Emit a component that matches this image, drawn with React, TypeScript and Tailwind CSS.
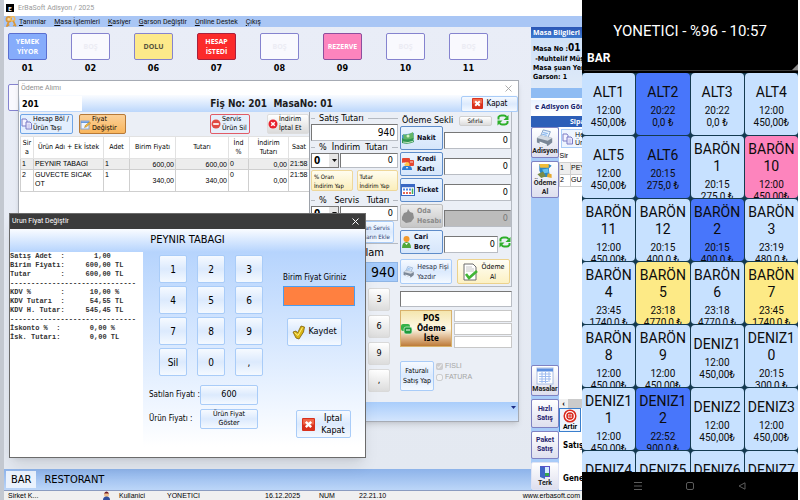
import React from "react";
import clsx from "clsx";

const tahoma = "font-['DejaVu_Sans_Condensed','Noto_Sans',sans-serif]";
const segoe = "font-['Open_Sans','Noto_Sans',sans-serif]";
const roboto = "font-['Roboto',sans-serif]";
const arial = "font-['Liberation_Sans',sans-serif]";

const blueButton =
  "flex items-center justify-center rounded-xs border border-[#a9ccf8] bg-linear-to-b from-[#f6faff] via-[#dceafd] to-[#f4f9ff]";
const field = "min-w-0 border border-[#b9bdc4] border-t-[#777] border-l-[#777] bg-white text-right";

/* ---------- icons ---------- */

function CloseBox({ size = 11 }: { size?: number }) {
  return (
    <svg width={size} height={size} viewBox="0 0 12 12" className="shrink-0">
      <rect width="12" height="12" rx="1" fill="#d8301c" />
      <rect x="1" y="1" width="10" height="5" fill="#f0684a" />
      <path d="M3.5 3.5l5 5M8.5 3.5l-5 5" stroke="#fff" strokeWidth="2.2" />
    </svg>
  );
}

function RefreshIcon() {
  return (
    <svg width="12" height="12" viewBox="0 0 12 12" className="shrink-0">
      <path d="M1.500 5.500V3q1-1.500 3-1.500h2.500q1.500 0 2.500 1.500" fill="none" stroke="#2eaf2b" strokeWidth="2" />
      <path d="M11.500 1v5H6.500z" fill="#2eaf2b" />
      <path d="M10.500 7v2q-1 1.500-3 1.500H5q-1.500 0-2.500-1.500" fill="none" stroke="#2eaf2b" strokeWidth="2" />
      <path d="M.5 11.500V6.500h5z" fill="#2eaf2b" />
    </svg>
  );
}

function KeysIcon() {
  return (
    <svg width="14" height="12" viewBox="0 0 12 11" className="shrink-0">
      <circle cx="4" cy="3" r="2.200" fill="#f4d9a4" stroke="#d9973a" strokeWidth="1.600" />
      <circle cx="7.500" cy="2.500" r="2" fill="none" stroke="#efb95e" strokeWidth="1.400" />
      <path d="M4 5L2 10M3 8l1.500.8M8 4.500l2.500 5M9.500 8l-1.500 1" stroke="#d9973a" strokeWidth="1.600" />
    </svg>
  );
}

function CopyIcon() {
  return (
    <svg width="11" height="12" viewBox="0 0 11 12" className="shrink-0">
      <path d="M1 1h4l1 1.500V8H1z" fill="#f5f4ff" stroke="#7a7ac4" />
      <path d="M5 4h4l1.500 1.500V11H5z" fill="#e8e6fb" stroke="#7a7ac4" />
      <path d="M6.500 7H9M6.500 9H9" stroke="#a7a7dc" strokeWidth=".7" />
    </svg>
  );
}

function EditIcon() {
  return (
    <svg width="11" height="11" viewBox="0 0 11 11" className="shrink-0">
      <rect x="1" y="2" width="8" height="8" fill="#eef5ff" stroke="#8aa6cf" />
      <path d="M1 3.200h8" stroke="#5f93da" strokeWidth="1.500" />
      <path d="M4.500 8.500l1-2.200L9.500 3l1 1.300-4 3.500z" fill="#f3b83a" stroke="#a97618" strokeWidth=".5" />
    </svg>
  );
}

function RoundIcon({ kind }: { kind: "minus" | "cross" }) {
  return (
    <svg width="10" height="10" viewBox="0 0 10 10" className="shrink-0">
      <circle cx="5" cy="5" r="4.500" fill={kind === "minus" ? "#e04b43" : "#e8202c"} />
      {kind === "minus" ? (
        <path d="M2.200 5h5.600" stroke="#fff" strokeWidth="1.700" />
      ) : (
        <path d="M3.200 3.200l3.600 3.600M6.800 3.200L3.200 6.800" stroke="#fff" strokeWidth="1.500" />
      )}
    </svg>
  );
}

function MoneyIcon() {
  return (
    <svg width="14" height="14" viewBox="0 0 14 14" className="shrink-0">
      <path d="M1 4l5-1 7-1-1 7-6 1-5 1z" fill="#4c95c9" />
      <path d="M2 3q4 2 10-2l1 7q-5 3-10 1z" fill="#63b567" />
      <path d="M1 7q4 3 11 0l1 4q-6 3-12 1z" fill="#2f9552" />
      <circle cx="7" cy="5" r="1.500" fill="#d5f2c7" />
      <path d="M2 11q5 1.500 10-.7" stroke="#bfe5c0" fill="none" />
    </svg>
  );
}

function CardsIcon() {
  return (
    <svg width="14" height="14" viewBox="0 0 14 14" className="shrink-0">
      <rect x="1" y="1" width="8" height="5" rx="1" fill="#e44531" />
      <rect x="5" y="3" width="8" height="6" rx="1" fill="#e44531" />
      <circle cx="6" cy="7.500" r="2.500" fill="#ffc44c" />
      <path d="M1 13q0-4 3-4h4q3 0 3 4z" fill="#2e7bd3" />
      <path d="M2 6h3M9 5h3" stroke="#fff" strokeWidth=".8" />
      <path d="M5 10l1 2 1-2" fill="#fff" />
    </svg>
  );
}

function TicketIcon() {
  return (
    <svg width="14" height="12" viewBox="0 0 14 12" className="shrink-0">
      <rect x=".5" y=".5" width="13" height="11" fill="#fff" stroke="#3a68c4" />
      <path d="M.5 2h13" stroke="#3a68c4" strokeWidth="2.500" />
      <path d="M3 4.500v2M6 4.500v2M9 4.500v2" stroke="#3f7ae0" strokeWidth="1.800" />
      <path d="M3 8v2M6 8v2M9 8v2" stroke="#e35a44" strokeWidth="1.800" />
      <path d="M11.500 4.500V10" stroke="#3fae57" strokeWidth="1.500" />
    </svg>
  );
}

function BlobIcon() {
  return (
    <svg width="14" height="16" viewBox="0 0 14 16" className="shrink-0">
      <path d="M1 9l2-4 3-1 1-3 2 3 3 1 1 5-3 4-5 1-4-3z" fill="#8d8d8d" />
    </svg>
  );
}

function PersonIcon() {
  return (
    <svg width="11" height="14" viewBox="0 0 11 14" className="shrink-0">
      <path d="M1 13q0-6 4.500-6T10 13z" fill="#4fa83b" />
      <circle cx="5.500" cy="4" r="3" fill="#f39a2c" />
      <path d="M4 8l1.500 2L7 8z" fill="#fff" />
    </svg>
  );
}

function PrinterIcon({ size = 12 }: { size?: number }) {
  return (
    <svg width={size} height={size} viewBox="0 0 20 20" className="shrink-0">
      <path d="M5 8L8 1l8 2-3 7z" fill="#e4f0fd" stroke="#7d9cc4" />
      <path d="M1 10l4-3 13 3v5l-5 4-12-4z" fill="#7b8797" />
      <path d="M1 10l4-3 13 3-5 3z" fill="#d3dae3" />
      <path d="M4 14l8 3v2l-8-3z" fill="#f4f7fb" />
      <path d="M8 4l5 1M7 6l5 1" stroke="#6aa4e8" />
    </svg>
  );
}

function PageCheckIcon() {
  return (
    <svg width="15" height="18" viewBox="0 0 15 18" className="shrink-0">
      <path d="M1 1h9l3 3v13H1z" fill="#fff" stroke="#6d6d6d" />
      <path d="M3 4h6M3 6h8M3 8h8" stroke="#b8b8b8" strokeWidth=".8" />
      <path d="M3 11l3 4 8-7" fill="none" stroke="#41b536" strokeWidth="2.600" />
    </svg>
  );
}

function PosIcon() {
  return (
    <svg width="12" height="12" viewBox="0 0 12 12" className="shrink-0">
      <rect x="0" y="1" width="9" height="7" rx="2" fill="#35b24a" />
      <rect x="3" y="4" width="8" height="7" rx="2" fill="#1d9a3c" stroke="#d7f5d9" strokeWidth=".7" />
      <path d="M5 7h4" stroke="#fff" />
    </svg>
  );
}

function TickIcon() {
  return (
    <svg width="14" height="15" viewBox="0 0 14 15" className="shrink-0">
      <path d="M1 7l3-1 1.500 2L9 1l3.500 1-1 5-4.500 7-3-1z" fill="#d9b514" stroke="#7d5f0a" strokeWidth=".8" />
      <path d="M2.500 7.500l3.500 3L10.500 2.500" stroke="#fff08a" fill="none" />
    </svg>
  );
}

function SpreadsheetIcon() {
  return (
    <svg width="18" height="18" viewBox="0 0 18 18">
      <rect x="1" y="1" width="16" height="16" fill="#fff" stroke="#a9bce2" />
      <path d="M1 3h16" stroke="#5d8fe0" strokeWidth="3" />
      <path d="M3 7h12M3 9.500h12M3 12h12M3 14.500h9M6 5v11M9.500 5v11M13 5v10" stroke="#9fbcf0" />
    </svg>
  );
}

function ScrollMoneyIcon() {
  return (
    <svg width="18" height="18" viewBox="0 0 18 18">
      <path d="M3 2h10l3 2-3 3 1 9H6L3 9z" fill="#2988c9" />
      <path d="M3 2h10v4H4z" fill="#f1bd3a" />
      <path d="M6 8l6-1 1 4-5 1z" fill="#6cc3ef" />
      <path d="M1 13l6-3 3 5-5 2z" fill="#7b8b46" />
      <path d="M12 12l4 1v4l-5-1z" fill="#e6a92d" />
    </svg>
  );
}

function DoorIcon() {
  return (
    <svg width="12" height="14" viewBox="0 0 12 14">
      <rect x="1" y="1" width="10" height="11" fill="#5b52c9" />
      <path d="M6 2h4v9H6z" fill="#d5ecff" />
      <path d="M6 8h4v3H6z" fill="#36a84c" />
      <path d="M1 1l5 2v11l-5-2z" fill="#4067c6" />
    </svg>
  );
}

function TargetIcon() {
  return (
    <svg width="14" height="14" viewBox="0 0 14 14">
      <circle cx="7" cy="7" r="5.800" fill="#fff" stroke="#d9281d" strokeWidth="1.500" />
      <circle cx="7" cy="7" r="3" fill="#fff" stroke="#d9281d" strokeWidth="1.500" />
      <path d="M7 4v6M4 7h6" stroke="#d9281d" />
    </svg>
  );
}

/* ---------- main window ---------- */

type Status = "eating" | "empty" | "full" | "bill" | "reserved";

const statusClass: Record<Status, string> = {
  eating: "border-[#5a6fd0] bg-[#86acfb] text-white",
  empty: "border-[#8583cf] bg-[#f9f9fe] text-[#ececf4]",
  full: "border-[#8583cf] bg-[#fde98a] text-[#55523c]",
  bill: "border-[#a8203c] bg-[#fb2a2a] text-white",
  reserved: "border-[#8c4f9e] bg-[#fd84bd] text-white",
};

const tables: { no: string; label: string; status: Status }[] = [
  { no: "01", label: "YEMEK\nYİYOR", status: "eating" },
  { no: "02", label: "BOŞ", status: "empty" },
  { no: "06", label: "DOLU", status: "full" },
  { no: "07", label: "HESAP\nİSTEDİ", status: "bill" },
  { no: "08", label: "BOŞ", status: "empty" },
  { no: "09", label: "REZERVE", status: "reserved" },
  { no: "10", label: "BOŞ", status: "empty" },
  { no: "11", label: "BOŞ", status: "empty" },
];

const menus = [
  ["T", "anımlar"],
  ["M", "asa İşlemleri"],
  ["K", "asiyer"],
  ["G", "arson Değiştir"],
  ["O", "nline Destek"],
  ["Ç", "ıkış"],
];

function MenuBar() {
  return (
    <>
      <header className={clsx("flex h-4 shrink-0 items-center gap-1 bg-white pl-0.5 text-[7px] text-[#9a9a9a]", roboto)}>
        <span className="flex size-2 items-center justify-center bg-black text-[6px] font-bold text-white">E</span>
        ErBaSoft Adisyon / 2025
      </header>
      <nav className={clsx("flex h-[11px] shrink-0 items-center bg-[#a9c6f5] text-[7px] text-[#111]", roboto)}>
        <KeysIcon />
        <div className="flex gap-2 pl-px">
          {menus.map(([key, rest]) => (
            <button key={rest} className="whitespace-nowrap leading-[10px]">
              <u>{key}</u>
              {rest}
            </button>
          ))}
        </div>
      </nav>
    </>
  );
}

function TableMap() {
  return (
    <main className="min-w-0 flex-1 overflow-hidden bg-linear-to-b from-[#e9edf7] to-[#e4e9f1] pt-1.5 pl-1">
      <div className="flex gap-6">
        {tables.map((t) => (
          <div key={t.no} className="flex w-[39px] shrink-0 flex-col items-center">
            <button
              className={clsx(
                "h-[27px] w-full whitespace-pre-line rounded-xs border text-[7px] leading-[10px] font-bold",
                statusClass[t.status]
              )}
            >
              {t.label}
            </button>
            <span className={clsx("pt-0.5 text-[9px] leading-3 font-bold text-black", tahoma)}>{t.no}</span>
          </div>
        ))}
      </div>
      <button aria-label="Masa" className="mt-2.5 h-[27px] w-[39px] rounded-xs border border-[#8583cf] bg-[#f9f9fe]" />
    </main>
  );
}

function SideButton({ label, icon, className }: { label: string; icon?: React.ReactNode; className?: string }) {
  return (
    <button
      className={clsx(
        "flex w-full flex-col items-center justify-center whitespace-pre-line rounded-xs border border-[#7f82c2] bg-linear-to-b from-white to-[#dedfee] text-[7px] leading-[9px] font-bold",
        roboto,
        className
      )}
    >
      {icon}
      {label}
    </button>
  );
}

function SidePanel() {
  return (
    <aside className="flex w-[51px] shrink-0 flex-col overflow-hidden whitespace-nowrap bg-white">
      <h2 className="h-[11px] shrink-0 bg-linear-to-b from-[#2a55b5] to-[#3f7bd0] pl-0.5 text-[7px] leading-[11px] font-bold text-white">
        Masa Bilgileri
      </h2>
      <div className="h-[50px] shrink-0 bg-linear-to-b from-[#cfe1f8] to-[#dfeaf8] pt-1 pl-0.5 text-[7px] leading-[9px] font-bold text-black">
        <p className={clsx("leading-[11px]", tahoma)}>
          Masa No :<span className="text-[10px]">01</span>
        </p>
        <p className={tahoma}>&nbsp;-Muhtelif Müşteri</p>
        <p className={tahoma}>Masa şuan Yemek</p>
        <p className={tahoma}>Garson: 1</p>
      </div>
      <div className="h-[10px] shrink-0 bg-[#8fbcf3]" />
      <button className="my-0.5 h-[14px] shrink-0 bg-linear-to-b from-[#e8f2ff] to-white pl-1 text-left text-[7px] font-bold text-[#171d6e]">
        e Adisyon Gönder
      </button>
      <h2 className="h-[11px] shrink-0 bg-[#2d5fb8] pl-[39px] text-[7px] leading-[11px] font-bold text-white">
        Sipariş
      </h2>
      <div className="flex min-h-0 flex-1">
        <div className="flex w-7 shrink-0 flex-col bg-[#a8cbf8] text-[#222]">
          <SideButton label="Adisyon" icon={<PrinterIcon size={18} />} className="h-[31px]" />
          <SideButton label={"Ödeme\nAl"} icon={<ScrollMoneyIcon />} className="mt-[3px] h-[37px]" />
          <div className="mt-auto flex flex-col gap-[3px]">
            <SideButton label="Masalar" icon={<SpreadsheetIcon />} className="h-[31px]" />
            <SideButton label={"Hızlı\nSatış"} className="h-[29px] text-[#26236e]" />
            <SideButton label={"Paket\nSatış"} className="h-[28px] text-[#26236e]" />
            <SideButton label="Terk" icon={<DoorIcon />} className="h-[28px] border-[#dfe3f4]" />
          </div>
        </div>
        <div className="flex min-w-0 flex-1 flex-col overflow-hidden text-[7px]">
          <button className="m-0.5 flex h-[19px] w-14 shrink-0 items-center gap-0.5 border border-[#a9ccf8] bg-[#eef5ff] text-left leading-[8px]">
            <CopyIcon />
            <span>
              Hesap
              <br />
              Ürün
            </span>
          </button>
          <table className={clsx("w-24 border-collapse text-left", arial)}>
            <thead>
              <tr className="h-[12px]">
                <th className="w-[11px] font-normal">Sir</th>
                <th />
              </tr>
            </thead>
            <tbody className="[&_td]:border [&_td]:border-[#cfcfcf]">
              <tr className="h-[12px] bg-[#eee]">
                <td>1</td>
                <td>PEYNIR</td>
              </tr>
              <tr className="h-[12px]">
                <td>2</td>
                <td>GUVECTE</td>
              </tr>
            </tbody>
          </table>
          <div className="mt-auto flex h-[9px] shrink-0 bg-[#cbcbcb]">
            <button aria-label="Sola kaydır" className="w-[9px] bg-[#f0f0f0] leading-[8px] font-bold">
              ‹
            </button>
          </div>
          <button className={clsx("flex h-6 w-[22px] shrink-0 flex-col items-center border border-[#3a7fcd] bg-[#eef4fd] leading-[8px] font-bold", roboto)}>
            <TargetIcon />
            Artir
          </button>
          <p className={clsx("shrink-0 pt-2 pl-1 text-[8px] leading-3 font-bold", tahoma)}>Satış</p>
          <p className={clsx("shrink-0 pt-[22px] pb-1.5 pl-1 text-[8px] leading-[10px] font-bold", tahoma)}>Genel</p>
        </div>
      </div>
    </aside>
  );
}

function StatusBar() {
  return (
    <footer className={clsx("flex h-[10px] shrink-0 items-end overflow-hidden whitespace-nowrap border-t border-[#8b9cc0] bg-[#f0f0f0] text-[7px] leading-[8px] text-black", arial)}>
      <span className="w-[98px] pl-1">Sirket K...</span>
      <svg width="9" height="9" viewBox="0 0 9 9">
        <circle cx="4.500" cy="3.500" r="2.500" fill="#f0c08d" />
        <path d="M2 2.500q2.500-4 5 0z" fill="#6b1a2a" />
        <path d="M1 9q0-3.500 3.500-3.500T8 9z" fill="#304f9f" />
      </svg>
      <span className="w-14 pl-2">Kullanici</span>
      <span className="w-[98px]">YONETICI</span>
      <span className="w-[54px]">16.12.2025</span>
      <span className="w-10">NUM</span>
      <span className="flex-1">22.21.10</span>
      <a href="#" className="pr-0.5">
        www.erbasoft.com
      </a>
    </footer>
  );
}

/* ---------- payment dialog ---------- */

const orderRows = [
  ["1", "PEYNIR TABAGI", "1", "600,00", "600,00", "0", "0,00", "21:58"],
  ["2", "GUVECTE SICAK OT", "1", "340,00", "340,00", "0", "0,00", "21:58"],
];

function OrderTable() {
  return (
    <table className={clsx("w-full table-fixed border-collapse text-[7px] leading-[9px] text-black", arial)}>
      <colgroup>
        <col className="w-[13px]" />
        <col className="w-[70px]" />
        <col className="w-[26px]" />
        <col className="w-[46px]" />
        <col className="w-[53px]" />
        <col className="w-5" />
        <col className="w-[40px]" />
        <col className="w-[21px]" />
      </colgroup>
      <thead>
        <tr className={clsx("h-[22px]", tahoma)}>
          {["Sir\na", "Ürün Adı + Ek İstek", "Adet", "Birim Fiyatı", "Tutarı", "İnd\n%", "İndirim\nTutarı", "Saat"].map((h) => (
            <th key={h} className="whitespace-pre border border-[#e2e2e2] p-0 font-normal">
              {h}
            </th>
          ))}
        </tr>
      </thead>
      <tbody>
        {orderRows.map((row, r) => (
          <tr key={row[0]} className={r === 0 ? "h-[11px] bg-[#ededed]" : "h-[22px]"}>
            {row.map((cell, i) => (
              <td
                key={i}
                className={clsx(
                  "border border-[#cfcfcf] p-0 pl-px",
                  [3, 4, 6].includes(i) ? "pr-px text-right align-middle" : "align-top"
                )}
              >
                {cell}
              </td>
            ))}
          </tr>
        ))}
      </tbody>
    </table>
  );
}

function Legend({ children }: { children: React.ReactNode }) {
  return (
    <div className="flex h-3 items-center gap-1 whitespace-pre text-[9px] leading-3">
      <span className="h-px w-1 bg-[#b5bac2]" />
      {children}
      <span className="h-px flex-1 bg-[#b5bac2]" />
    </div>
  );
}

function RateRow({ label }: { label: string }) {
  return (
    <div className="flex h-[15px] gap-px">
      <select
        aria-label={`${label} oranı`}
        className="w-7 appearance-none border border-[#777] bg-white bg-linear-to-r from-white from-65% to-[#e6e6e6] to-65% pl-0.5 text-[10px] leading-[13px] font-bold"
      >
        <option>0</option>
      </select>
      <svg width="5" height="3" viewBox="0 0 5 3" className="-ml-2 mt-1.5 mr-0.5">
        <path d="M0 0h5L2.500 3z" fill="#111" />
      </svg>
      <input aria-label={`${label} tutarı`} defaultValue="0" className={clsx(field, "flex-1 pr-1 text-[9px]")} />
    </div>
  );
}

function AmountColumn() {
  const yellow =
    "h-[21px] flex-1 whitespace-pre rounded-xs border border-[#eed79a] bg-linear-to-b from-[#fffdf0] to-[#fbeebb] pl-0.5 text-left text-[6px] leading-[9px]";
  return (
    <section className="w-[91px] shrink-0 border-l border-[#9da2aa] pr-0.5 pl-px">
      <Legend>Satış Tutarı</Legend>
      <input aria-label="Satış Tutarı" defaultValue="940" className={clsx(field, "block h-[17px] w-full pr-0.5 text-[10px]")} />
      <Legend>%  İndirim  Tutarı</Legend>
      <RateRow label="İndirim" />
      <div className="flex gap-1 pt-0.5">
        <button className={yellow}>{"% Oran\nİndirim Yap"}</button>
        <button className={yellow}>{"Tutar\nİndirim Yap"}</button>
      </div>
      <div className="pt-[3px]">
        <Legend>%   Servis   Tutarı</Legend>
      </div>
      <RateRow label="Servis" />
      <div className="flex justify-end pr-1">
        <button className={clsx(blueButton, "h-[22px] w-10 whitespace-pre text-right text-[6px] leading-[9px] text-[#2b3f73]")}>
          {"Oran Servis\nTutarın Ekle"}
        </button>
      </div>
      <p className="border-t border-[#b5bac2] pr-3.5 text-right text-[11px] leading-[18px]">Toplam</p>
      <output className="block h-5 border border-[#8fb5e5] bg-[#a5cbfb] pr-0.5 text-right text-[14px] leading-[18px]">940</output>
      <div className="flex flex-col items-end gap-1 pt-1.5 pr-2">
        {["3", "6", "9", ","].map((n) => (
          <button key={n} className="h-[23px] w-[22px] rounded-xs border border-[#d9d9d9] bg-linear-to-b from-white to-[#dcdcdc] text-[9px]">
            {n}
          </button>
        ))}
      </div>
    </section>
  );
}

const payments = [
  { label: "Nakit", icon: <MoneyIcon /> },
  { label: "Kredi\nKartı", icon: <CardsIcon /> },
  { label: "Ticket", icon: <TicketIcon /> },
  { label: "Oda\nHesabı", icon: <BlobIcon />, disabled: true },
  { label: "Cari\nBorç", icon: <PersonIcon />, refresh: true },
];

function PaymentColumn() {
  return (
    <section className="min-w-0 flex-1 pr-1.5">
      <div className="border-r border-b border-[#b5bac2] pb-0.5">
        <div className="flex h-[14px] items-end justify-between pr-0.5 pl-0.5">
          <span className="whitespace-nowrap text-[9px] leading-3">Ödeme Sekli</span>
          <button className="h-[10px] w-[33px] rounded-xs border border-[#cfcfcf] bg-linear-to-b from-white to-[#ddd] text-[6px] leading-[8px]">
            Sıfırla
          </button>
          <RefreshIcon />
        </div>
        <div className="flex flex-col gap-0.5">
          {payments.map((p) => (
            <div key={p.label} className="flex items-center gap-px">
              <button
                disabled={p.disabled}
                className={clsx(
                  "flex h-6 w-[43px] shrink-0 items-center gap-0.5 whitespace-pre rounded-xs border text-left text-[7px] leading-[10px] font-bold",
                  p.disabled
                    ? "border-[#bdbdbd] bg-linear-to-b from-[#ececec] to-[#c6c6c6] text-[#8a8a8a]"
                    : "border-[#5e8cc9] bg-linear-to-b from-[#e9f3ff] to-[#d6e6fb] text-[#0c0c24]"
                )}
              >
                {p.icon}
                {p.label}
              </button>
              <input
                aria-label={p.label}
                defaultValue="0"
                disabled={p.disabled}
                className={clsx(field, "mt-1 h-[17px] flex-1 pr-0.5 text-[9px]", p.disabled && "bg-[#bcbcbc]! text-[#777]")}
              />
              {p.refresh ? <RefreshIcon /> : null}
            </div>
          ))}
        </div>
        <div className="flex justify-between pt-[5px] pr-px text-[7px] leading-[10px]">
          <button className={clsx(blueButton, "h-[25px] w-[52px] gap-0.5 whitespace-pre text-left text-[#222a44]")}>
            <PrinterIcon />
            {"Hesap Fişi\nYazdır"}
          </button>
          <button className="flex h-[25px] w-[53px] items-center justify-center gap-1 whitespace-pre rounded-xs border border-[#ecd28c] bg-linear-to-b from-[#fffef6] to-[#fcf1c4]">
            <PageCheckIcon />
            {"Ödeme\nAl"}
          </button>
        </div>
      </div>
      <input aria-label="Açıklama" className={clsx(field, "mt-1 block h-4 w-full")} />
      <div className="mt-[3px] flex gap-0.5">
        <button className="flex h-[37px] w-[52px] shrink-0 items-center gap-1 whitespace-pre border border-[#d8b26d] bg-linear-to-b from-[#f5e6ae] via-[#fdf8e6] to-[#bd7b36] text-[8px] leading-[10px] font-bold">
          <PosIcon />
          {"POS\nÖdeme\nİste"}
        </button>
        <div className="flex flex-1 flex-col gap-px">
          {[1, 2, 3].map((n) => (
            <input key={n} aria-label={`POS ${n}`} className="h-3 w-full min-w-0 border border-[#c7c7c7] bg-white" />
          ))}
        </div>
      </div>
      <div className="mt-[13px] flex gap-0.5 text-[7px]">
        <button className={clsx(blueButton, "h-[30px] w-[34px] whitespace-pre leading-[10px]")}>{"Faturalı\nSatış Yap"}</button>
        <div className={clsx("flex flex-col gap-px text-[#a5a5a5]", arial)}>
          <label className="flex h-[10px] items-center gap-0.5">
            <input type="checkbox" defaultChecked disabled className="size-[7px]" /> FISLI
          </label>
          <label className="flex h-[10px] items-center gap-0.5">
            <input type="checkbox" disabled className="size-[7px]" /> FATURA
          </label>
        </div>
      </div>
    </section>
  );
}

function PaymentDialog() {
  return (
    <div className="absolute top-20 left-[14px] flex h-[342px] w-[501px] flex-col border border-[#a6abb4] bg-[#ebeff6] shadow-md">
      <div className={clsx("flex h-[14px] shrink-0 items-center justify-between bg-white px-0.5 pr-1.5 text-[7px] text-[#8e8e8e]", roboto)}>
        Ödeme Alımı
        <button aria-label="Kapat">
          <svg width="7" height="7" viewBox="0 0 7 7">
            <path d="M.5.5l6 6M6.500.5l-6 6" stroke="#999" strokeWidth=".8" />
          </svg>
        </button>
      </div>
      <div className={clsx("flex h-[17px] shrink-0 items-center justify-between bg-linear-to-b from-[#fafcff] to-[#bcd7fb] pl-px", tahoma)}>
        <input aria-label="Masa" defaultValue="201" className="h-[15px] w-[62px] bg-white pl-0.5 text-[9px] font-bold" />
        <h1 className="whitespace-pre text-[10px] font-bold text-[#1c1c1c]">Fiş No: 201  MasaNo: 01</h1>
        <button className={clsx(blueButton, "h-4 w-[57px] gap-1 text-[8px]")}>
          <CloseBox />
          Kapat
        </button>
      </div>
      <div className={clsx("flex min-h-0 flex-1 overflow-hidden", tahoma)}>
        <section className="w-[290px] shrink-0 bg-white pl-px">
          <div className="flex h-6 items-center bg-[#ebeff6] text-[7px] leading-[9px] *:flex *:h-5 *:items-center *:gap-px *:whitespace-pre *:rounded-xs *:border *:text-left">
            <button className="w-[53px] border-[#6fa5e6] bg-[#e3effe]">
              <CopyIcon />
              {"Hesap Böl /\nÜrün Taşı"}
            </button>
            <button className="ml-1.5 w-[47px] border-[#b77a38] bg-linear-to-b from-[#fbd097] to-[#f9b65c]">
              <EditIcon />
              {"Fiyat\nDeğiştir"}
            </button>
            <button className="ml-auto w-10 border-[#e15b66] bg-[#e6effb]">
              <RoundIcon kind="minus" />
              {"Servis\nÜrün Sil"}
            </button>
            <button className="ml-[17px] w-[42px] border-[#ddd] bg-linear-to-b from-white to-[#dadada]">
              <RoundIcon kind="cross" />
              {"İndirim\nİptal Et"}
            </button>
          </div>
          <OrderTable />
        </section>
        <AmountColumn />
        <PaymentColumn />
      </div>
      <div className="flex h-[19px] shrink-0 justify-end bg-linear-to-b from-[#a9cdfb] to-[#d3e5fd] pt-1 pr-0.5">
        <svg width="5" height="3" viewBox="0 0 5 3">
          <path d="M0 0h5L2.500 3z" fill="#1c2d85" />
        </svg>
      </div>
    </div>
  );
}

/* ---------- price dialog ---------- */

const receipt = `Satış Adet  :       1,00
Birim Fiyatı:     600,00 TL
Tutar       :     600,00 TL
------------------------------
KDV %       :      10,00 %
KDV Tutarı  :      54,55 TL
KDV H. Tutar:     545,45 TL
------------------------------
İskonto %  :       0,00 %
İsk. Tutarı:       0,00 TL`;

function PriceDialog() {
  return (
    <div className={clsx("absolute top-[213px] left-[5px] flex h-[245px] w-[357px] flex-col border border-[#6b6b6b] bg-white shadow-lg", tahoma)}>
      <div className={clsx("flex h-[15px] shrink-0 items-center justify-between bg-[#3b3b3b] px-0.5 pr-1.5 text-[7px] text-white", roboto)}>
        Urun Fiyat Değiştir
        <button aria-label="Pencereyi kapat">
          <svg width="7" height="7" viewBox="0 0 7 7">
            <path d="M.5.5l6 6M6.500.5l-6 6" stroke="#fff" />
          </svg>
        </button>
      </div>
      <h2 className="h-[23px] shrink-0 bg-linear-to-b from-[#fafcff] to-[#b6d4fd] text-center text-[11px] leading-[22px]">
        PEYNIR TABAGI
      </h2>
      <div className="flex min-h-0 flex-1 bg-linear-to-b from-[#b6d4fd] to-white to-95%">
        <pre className="w-[133px] shrink-0 bg-white font-['Liberation_Mono',monospace] text-[7px] leading-[9px] font-bold text-[#333]">
          {receipt}
        </pre>
        <div className="w-[131px] shrink-0 pt-[3px] pl-1.5 text-[8px]">
          <div className="grid w-[114px] grid-cols-3 gap-x-2.5 gap-y-[3px] pl-2.5 text-[10px]">
            {["1", "2", "3", "4", "5", "6", "7", "8", "9", "Sil", "0", ","].map((k) => (
              <button key={k} className={clsx(blueButton, "h-7")}>
                {k}
              </button>
            ))}
          </div>
          <div className="mt-[9px] grid grid-cols-[51px_58px] items-center gap-y-1">
            <label htmlFor="sold" className="whitespace-nowrap">
              Satılan Fiyatı :
            </label>
            <button id="sold" className={clsx(blueButton, "h-5 text-[9px]")}>
              600
            </button>
            <span className="whitespace-nowrap">Ürün Fiyatı :</span>
            <button className={clsx(blueButton, "h-5 whitespace-pre text-[7px] leading-[9px]")}>{"Ürün Fiyat\nGöster"}</button>
          </div>
        </div>
        <div className="flex flex-1 flex-col pt-5 pr-2 pl-[9px]">
          <label htmlFor="price" className="whitespace-nowrap text-[8px] leading-3">
            Birim Fiyat Giriniz
          </label>
          <input id="price" className="mt-0.5 h-5 w-[72px] border border-[#4a9df0] bg-[#ff8040]" />
          <button className={clsx(blueButton, "mt-3 ml-1 h-7 w-[55px] gap-0.5 text-[9px]")}>
            <TickIcon />
            Kaydet
          </button>
          <button className={clsx(blueButton, "mt-auto mb-[19px] ml-[13px] h-7 w-[55px] gap-1.5 text-[9px] leading-3")}>
            <CloseBox size={13} />
            <span>
              İptal
              <br />
              Kapat
            </span>
          </button>
        </div>
      </div>
    </div>
  );
}

/* ---------- phone ---------- */

type Cell = { name: string; time: string; price: string; tone?: "blue" | "pink" | "yellow" };

const cells: Cell[] = [
  { name: "ALT1", time: "12:00", price: "450,00₺" },
  { name: "ALT2", time: "20:22", price: "0,0 ₺", tone: "blue" },
  { name: "ALT3", time: "20:22", price: "0,0 ₺" },
  { name: "ALT4", time: "12:00", price: "450,00₺" },
  { name: "ALT5", time: "12:00", price: "450,00₺" },
  { name: "ALT6", time: "20:15", price: "275,0 ₺", tone: "blue" },
  { name: "BARÖN\n1", time: "20:15", price: "275,0 ₺" },
  { name: "BARÖN\n10", time: "12:00", price: "450,00₺", tone: "pink" },
  { name: "BARÖN\n11", time: "12:00", price: "450,00₺" },
  { name: "BARÖN\n12", time: "20:15", price: "400,0 ₺" },
  { name: "BARÖN\n2", time: "20:15", price: "400,0 ₺", tone: "blue" },
  { name: "BARÖN\n3", time: "23:19", price: "480,0 ₺" },
  { name: "BARÖN\n4", time: "23:45", price: "1740,0 ₺" },
  { name: "BARÖN\n5", time: "23:18", price: "4770,0 ₺", tone: "yellow" },
  { name: "BARÖN\n6", time: "23:18", price: "4770,0 ₺" },
  { name: "BARÖN\n7", time: "23:45", price: "1740,0 ₺", tone: "yellow" },
  { name: "BARÖN\n8", time: "12:00", price: "450,00₺" },
  { name: "BARÖN\n9", time: "12:00", price: "450,00₺" },
  { name: "DENIZ1", time: "12:00", price: "450,00₺" },
  { name: "DENIZ1\n0", time: "20:15", price: "300,0 ₺" },
  { name: "DENIZ1\n1", time: "12:00", price: "450,00₺" },
  { name: "DENIZ1\n2", time: "22:52", price: "900,0 ₺", tone: "blue" },
  { name: "DENIZ2", time: "12:00", price: "450,00₺" },
  { name: "DENIZ3", time: "12:00", price: "450,00₺" },
  { name: "DENIZ4", time: "12:00", price: "450,00₺" },
  { name: "DENIZ5", time: "12:00", price: "450,00₺" },
  { name: "DENIZ6", time: "12:00", price: "450,00₺" },
  { name: "DENIZ7", time: "12:00", price: "450,00₺" },
];

const toneClass = {
  blue: "bg-[#4876fb]",
  pink: "bg-[#fd84bd]",
  yellow: "bg-[#fdea86]",
};

function Phone() {
  return (
    <section className={clsx("flex w-[27.25%] shrink-0 flex-col border-r-2 border-white bg-black text-white", roboto)}>
      <h1 className="pt-5 text-center text-[15px] leading-[22px]">YONETICI - %96 - 10:57</h1>
      <button className="mt-2 ml-0.5 flex h-[21px] items-start justify-between border-b border-[#3a3a3a] pl-[3px] text-[12px] leading-4 font-bold">
        BAR
        <svg width="6" height="6" viewBox="0 0 6 6" className="self-end">
          <path d="M6 0v6H0z" fill="#8a8a8a" />
        </svg>
      </button>
      <div className="mt-0.5 grid min-h-0 flex-1 auto-rows-[62px] grid-cols-4 gap-px overflow-hidden bg-[#143a50]">
        {cells.map((c) => (
          <button
            key={c.name}
            className={clsx(
              "flex min-w-0 flex-col items-center overflow-hidden rounded-sm pt-[5px] text-[#0c0c0c]",
              c.tone ? toneClass[c.tone] : "bg-[#c7e1ff]"
            )}
          >
            <span className="my-auto flex flex-col text-[10px] leading-3">
              <span className="whitespace-pre pb-1 text-[14px] leading-[17px]">{c.name}</span>
              <span>{c.time}</span>
              <span>{c.price}</span>
            </span>
          </button>
        ))}
      </div>
      <nav className="flex h-7 shrink-0 items-center justify-between px-[52px]">
        <button aria-label="Son uygulamalar">
          <svg width="8" height="8" viewBox="0 0 8 8">
            <path d="M0 .5h8M0 4h8M0 7.500h8" stroke="#5c5c5c" />
          </svg>
        </button>
        <button aria-label="Ana ekran">
          <svg width="8" height="8" viewBox="0 0 8 8">
            <rect x=".5" y=".5" width="7" height="7" rx="1.500" fill="none" stroke="#5c5c5c" />
          </svg>
        </button>
        <button aria-label="Geri">
          <svg width="8" height="8" viewBox="0 0 8 8">
            <path d="M7 .8v6.400L1 4z" fill="none" stroke="#5c5c5c" />
          </svg>
        </button>
      </nav>
    </section>
  );
}

export default function App() {
  return (
    <div className={clsx("flex h-screen overflow-hidden bg-white text-black", segoe)}>
      <div className="relative flex min-w-0 flex-1 flex-col overflow-hidden border-l-4 border-[#c3c8d0] bg-white">
        <MenuBar />
        <div className="flex min-h-0 flex-1">
          <div className="flex min-w-0 flex-1 flex-col">
            <TableMap />
            <div className={clsx("flex h-[21px] shrink-0 items-center gap-2 bg-linear-to-b from-[#8db3ea] to-[#bcd6f8] px-0.5 text-[11px]", tahoma)}>
              <button className="h-[17px] bg-[#eaf2fd] px-[5px] leading-4">BAR</button>
              <button className="leading-4">RESTORANT</button>
            </div>
          </div>
          <SidePanel />
        </div>
        <StatusBar />
        <PaymentDialog />
        <PriceDialog />
      </div>
      <Phone />
    </div>
  );
}
